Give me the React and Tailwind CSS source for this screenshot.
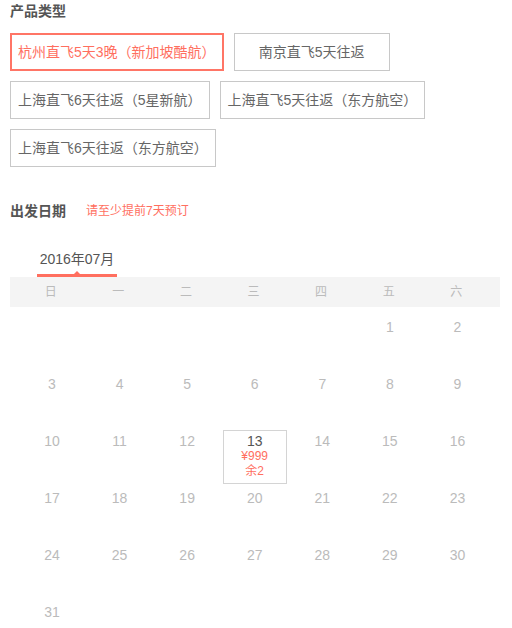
import React from "react";

const products = [
  { label: "杭州直飞5天3晚（新加坡酷航）", active: true },
  { label: "南京直飞5天往返" },
  { label: "上海直飞6天往返（5星新航）" },
  { label: "上海直飞5天往返（东方航空）" },
  { label: "上海直飞6天往返（东方航空）" },
];

const weekdays = ["日", "一", "二", "三", "四", "五", "六"];

function buildDays() {
  const cells = [];
  for (let i = 0; i < 5; i++) cells.push(null);
  for (let d = 1; d <= 31; d++) cells.push(d);
  return cells;
}

export default function App() {
  const days = buildDays();
  return (
    <div
      className="w-[512px] h-[628px] overflow-hidden bg-white pl-[10px]"
      style={{ fontFamily: '"Liberation Sans", "Noto Sans CJK SC", sans-serif' }}
    >
      <div className="w-[490px]">
        <div className="pt-[1px] text-[14px] font-bold leading-[20px] text-[#555]">产品类型</div>
        <div className="mt-[12px] flex flex-wrap gap-[10px]">
          {products.map((p) =>
            p.active ? (
              <div
                key={p.label}
                className="flex h-[38px] min-w-[156px] items-center justify-center border-2 border-[#ff7566] px-[6px] text-[14px] text-[#ff6f5f] whitespace-nowrap"
              >
                {p.label}
              </div>
            ) : (
              <div
                key={p.label}
                className="flex h-[38px] min-w-[156px] items-center justify-center border border-[#c8c8c8] px-[7px] text-[14px] text-[#666] whitespace-nowrap"
              >
                {p.label}
              </div>
            )
          )}
        </div>

        <div className="mt-[34px] flex h-[20px] items-center">
          <span className="text-[14px] font-bold leading-[20px] text-[#555]">出发日期</span>
          <span className="ml-[20px] text-[12px] leading-[20px] text-[#ff6f5f]">请至少提前7天预订</span>
        </div>

        <div className="relative mt-[28px] ml-[27px] w-[80px] border-b-[3px] border-[#ff6f5f] pb-[5px] text-center text-[14px] leading-[20px] text-[#555]">
          2016年07月
          <span className="absolute bottom-0 left-1/2 h-0 w-0 -translate-x-1/2 border-x-[3px] border-b-[3px] border-x-transparent border-b-[#ff6f5f]"></span>
        </div>

        <div className="grid h-[30px] grid-cols-7 items-center bg-[#f4f4f4] pl-[7px] pr-[10px] text-center text-[12px] text-[#bbb]">
          {weekdays.map((w) => (
            <div key={w}>{w}</div>
          ))}
        </div>

        <div className="grid grid-cols-7 pl-[7px] pr-[10px] pt-[6px]">
          {days.map((d, i) => (
            <div key={i} className="h-[57px] pt-[3px]">
              {d === 13 ? (
                <div className="ml-[3px] flex h-[54px] w-[64px] flex-col items-center border border-[#d4d4d4] pt-[2px]">
                  <div className="text-[14px] leading-[16px] text-[#555]">13</div>
                  <div className="text-[12px] leading-[15px] text-[#ff6f5f]">¥999</div>
                  <div className="text-[12px] leading-[15px] text-[#ff6f5f]">余2</div>
                </div>
              ) : (
                <div className="ml-[3px] flex h-[54px] w-[64px] flex-col items-center border border-transparent pt-[2px]">
                  {d !== null && <div className="text-[14px] leading-[16px] text-[#bbb]">{d}</div>}
                </div>
              )}
            </div>
          ))}
        </div>
      </div>
    </div>
  );
}
